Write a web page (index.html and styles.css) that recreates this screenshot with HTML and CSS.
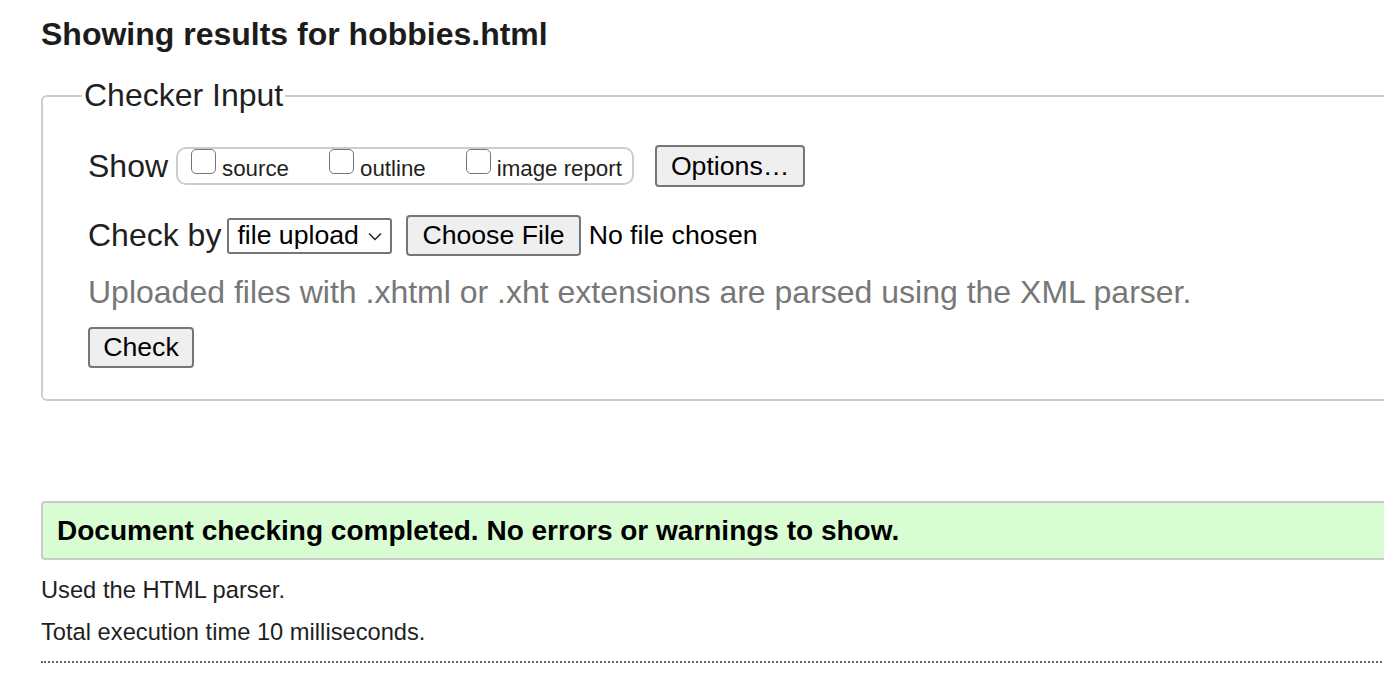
FILE: index.html
```html
<!DOCTYPE html>
<html lang="en">
<head>
<meta charset="utf-8">
<title>Showing results for hobbies.html</title>
<link rel="stylesheet" href="styles.css">
</head>
<body>
<h2 class="title">Showing results for hobbies.html</h2>
<form class="checker">
  <fieldset class="checker-input">
    <legend class="legend">Checker Input</legend>
    <div class="row row-show">
      <span class="row-label">Show</span>
      <span class="show-group">
        <label class="opt"><input type="checkbox" class="cb"><span class="opt-text">source</span></label>
        <label class="opt"><input type="checkbox" class="cb"><span class="opt-text">outline</span></label>
        <label class="opt"><input type="checkbox" class="cb"><span class="opt-text">image report</span></label>
      </span>
      <button type="button" class="btn btn-options">Options…</button>
    </div>
    <div class="row row-by">
      <span class="row-label">Check by</span>
      <span class="select">file upload<svg class="chev" width="14" height="9" viewBox="0 0 14 9"><path d="M1 1.5 L7 7.5 L13 1.5" fill="none" stroke="#222" stroke-width="1.4"/></svg></span>
      <button type="button" class="btn btn-file">Choose File</button>
      <span class="no-file">No file chosen</span>
    </div>
    <p class="hint">Uploaded files with .xhtml or .xht extensions are parsed using the XML parser.</p>
    <button type="button" class="btn btn-check">Check</button>
  </fieldset>
</form>
<div class="success">Document checking completed. No errors or warnings to show.</div>
<p class="info first">Used the HTML parser.</p>
<p class="info">Total execution time 10 milliseconds.</p>
<hr class="dots">
</body>
</html>
```
FILE: styles.css
```css
html {
  overflow: hidden;
}
body {
  margin: 0;
  padding: 0 0 0 41px;
  font-family: "Liberation Sans", Arial, sans-serif;
  color: #1f1f1f;
  background: #fff;
}
.title {
  margin: 16px 0 0;
  font-size: 32px;
  line-height: 37px;
  font-weight: bold;
  color: #1c1c1c;
}
.checker {
  margin: 0;
}
.checker-input {
  margin: 24px 0 0;
  width: 1400px;
  box-sizing: border-box;
  border: 2px solid #cdcdcd;
  border-radius: 6px;
  padding: 31px 0 31px 45px;
  min-width: 0;
}
.legend {
  font-size: 32px;
  line-height: 37px;
  padding: 0 2px;
  margin-left: -6px;
  color: #1f1f1f;
}
.row {
  display: flex;
  align-items: center;
}
.row-show {
  height: 42px;
}
.row-label {
  font-size: 32px;
  line-height: 37px;
}
.show-group {
  display: flex;
  align-items: center;
  height: 38px;
  box-sizing: border-box;
  margin-left: 8px;
  border: 2px solid #cdcdcd;
  border-radius: 10px;
  padding: 0 10px 0 13px;
  gap: 40px;
}
.opt {
  display: flex;
  align-items: center;
  gap: 6px;
}
.cb {
  appearance: none;
  -webkit-appearance: none;
  width: 25px;
  height: 25px;
  margin: 0 0 9px;
  box-sizing: border-box;
  border: 1.5px solid #767676;
  border-radius: 5px;
  background: #fff;
}
.opt-text {
  font-size: 22.3px;
  line-height: 25px;
  padding-top: 4px;
  color: #1f1f1f;
}
.btn {
  font-family: "Liberation Sans", Arial, sans-serif;
  font-size: 26.67px;
  color: #000;
  background: #efefef;
  border: 2px solid #767676;
  border-radius: 4px;
  box-sizing: border-box;
  padding: 0 14px;
  margin: 0;
}
.btn-options {
  height: 42px;
  margin-left: 21px;
}
.row-by {
  margin-top: 28px;
  height: 41px;
}
.select {
  display: flex;
  align-items: center;
  box-sizing: border-box;
  width: 165px;
  height: 36px;
  margin-left: 6px;
  padding: 0 0 0 8px;
  border: 2px solid #767676;
  border-radius: 3px;
  font-size: 26.67px;
  color: #000;
  background: #fff;
  gap: 9px;
}
.chev {
  display: block;
  margin-top: 2px;
}
.btn-file {
  height: 41px;
  margin-left: 14px;
}
.no-file {
  margin-left: 8px;
  font-size: 26.67px;
  color: #000;
}
.hint {
  margin: 18px 0 0;
  font-size: 32px;
  line-height: 37px;
  color: #777;
}
.btn-check {
  display: block;
  margin-top: 16px;
  height: 41px;
  width: 106px;
  padding: 0;
}
.success {
  margin-top: 100px;
  width: 1400px;
  box-sizing: border-box;
  height: 59px;
  display: flex;
  align-items: center;
  padding: 0 14px;
  background: #d9fdd3;
  border: 2px solid #cacaca;
  border-radius: 4px;
  font-size: 28px;
  font-weight: bold;
  color: #000;
}
.info {
  margin: 16px 0 0;
  font-size: 23.7px;
  line-height: 26px;
  color: #1f1f1f;
}
.info.first {
  margin-top: 17px;
}
.dots {
  margin: 16px 0 0;
  width: 1400px;
  height: 0;
  border: 0;
  border-top: 2px dotted #666;
}
```
